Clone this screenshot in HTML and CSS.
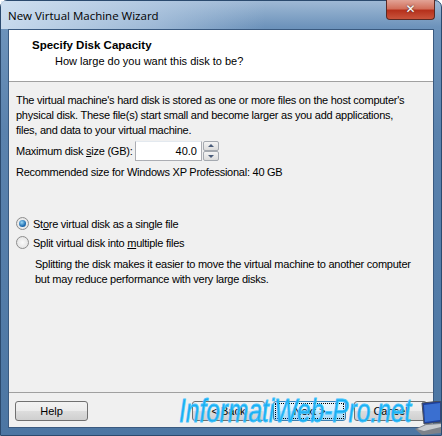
FILE: index.html
```html
<!DOCTYPE html>
<html lang="en">
<head>
    <meta charset="UTF-8">
    <title>New Virtual Machine Wizard</title>
    <link rel="stylesheet" href="styles.css">
</head>
<body>
    <div class="window">
        <div class="titlebar">
            <span class="title">New Virtual Machine Wizard</span>
            <span class="close">&#x2715;</span>
        </div>

        <div class="client">
            <div class="header">
                <div class="header-title">Specify Disk Capacity</div>
                <div class="header-sub">How large do you want this disk to be?</div>
            </div>

            <div class="content">
                <p class="intro">The virtual machine's hard disk is stored as one or more files on the host computer's<br>physical disk. These file(s) start small and become larger as you add applications,<br>files, and data to your virtual machine.</p>

                <div class="size-row">
                    <label for="diskSize">Maximum disk <u>s</u>ize (GB):</label>
                    <div class="spin">
                        <input type="text" id="diskSize" value="40.0">
                        <div class="spin-btns">
                            <span class="spin-up"></span>
                            <span class="spin-down"></span>
                        </div>
                    </div>
                </div>

                <p class="recommended">Recommended size for Windows XP Professional: 40 GB</p>

                <div class="radio-group">
                    <div class="radio-item">
                        <span class="radio checked"></span>
                        <span>St<u>o</u>re virtual disk as a single file</span>
                    </div>
                    <div class="radio-item">
                        <span class="radio"></span>
                        <span>Split virtual disk into <u>m</u>ultiple files</span>
                    </div>
                    <p class="radio-note">Splitting the disk makes it easier to move the virtual machine to another computer<br>but may reduce performance with very large disks.</p>
                </div>
            </div>

            <div class="footer">
                <button class="btn">Help</button>
                <div class="footer-right">
                    <button class="btn">&lt; Back</button>
                    <button class="btn default">Next &gt;</button>
                    <button class="btn">Cancel</button>
                </div>
            </div>
        </div>

        <div class="watermark">InformatiWeb-Pro.net</div>
        <svg class="laptop" width="26" height="34" viewBox="0 0 26 34">
            <polygon points="7,2 26,0 26,21 9,23" fill="#1d3f9a" stroke="#4a4f58" stroke-width="1"/>
            <polygon points="9,4 25,2 25,19 10,21" fill="#3a6fd0"/>
            <polygon points="0,28 11,23 26,22 26,32 7,34" fill="#7d828a"/>
            <polygon points="2,28 11,24 26,23 26,26 9,30" fill="#c9ccd0"/>
        </svg>
    </div>
</body>
</html>
```

FILE: styles.css
```css
html, body {
    margin: 0;
    padding: 0;
}

body {
    width: 442px;
    height: 436px;
    overflow: hidden;
    font-family: 'Liberation Sans', Arial, sans-serif;
    font-size: 11px;
    letter-spacing: -0.25px;
    color: #000;
    background: #fff;
}

.window {
    position: relative;
    box-sizing: border-box;
    width: 442px;
    height: 436px;
    border: 1px solid #2b4a6e;
    border-radius: 7px 7px 0 0;
    background: linear-gradient(180deg, #9fb9d5 0%, #6d93bb 6%, #5a82ad 30%, #4c76a3 100%);
    padding: 0 7px 7px 7px;
    display: flex;
    flex-direction: column;
}

.titlebar {
    height: 28px;
    display: flex;
    align-items: flex-start;
    background: linear-gradient(90deg, rgba(215, 230, 245, 0.85) 0%, rgba(190, 210, 232, 0.6) 35%, rgba(90, 130, 175, 0) 60%);
    margin: 0 -7px;
    padding: 0 7px;
    letter-spacing: 0;
}

.title {
    font-family: 'Open Sans', 'Liberation Sans', sans-serif;
    font-size: 11.5px;
    margin-top: 7px;
    color: #000;
}

.close {
    margin-left: auto;
    margin-right: -1px;
    margin-top: -1px;
    width: 47px;
    height: 19px;
    border: 1px solid #5a2a24;
    border-top: none;
    border-radius: 0 0 4px 4px;
    background: linear-gradient(180deg, #e2a396 0%, #d2705c 45%, #b6311c 55%, #c9543c 100%);
    color: #fff;
    font-family: 'DejaVu Sans', sans-serif;
    font-weight: bold;
    font-size: 12px;
    text-align: center;
    line-height: 19px;
    text-shadow: 0 0 2px #333;
}

.client {
    flex: 1;
    display: flex;
    flex-direction: column;
    background: #f0f0f0;
    border: 1px solid #3a5a80;
}

.header {
    height: 52px;
    background: #fff;
    border-bottom: 1px solid #a0a0a0;
    box-sizing: border-box;
    padding: 6px 0 0 23px;
    letter-spacing: 0;
}

.header-title {
    font-weight: bold;
    font-size: 11.5px;
    height: 18px;
    line-height: 18px;
}

.header-sub {
    padding-left: 23px;
    line-height: 15px;
}

.content {
    flex: 1;
    padding: 11px 8px 0 7px;
}

.intro {
    margin: 0;
    line-height: 15px;
    white-space: nowrap;
}

.size-row {
    display: flex;
    align-items: center;
    margin-top: 3px;
}

.size-row label {
    width: 119px;
    white-space: nowrap;
}

.spin {
    display: flex;
    align-items: center;
}

.spin input {
    box-sizing: border-box;
    width: 67px;
    height: 20px;
    border: 1px solid #abadb3;
    border-top-color: #e3e9ef;
    font: inherit;
    letter-spacing: 0;
    text-align: right;
    padding: 0 4px;
    background: #fff;
}

.spin-btns {
    display: flex;
    flex-direction: column;
    margin-left: 1px;
}

.spin-up, .spin-down {
    position: relative;
    box-sizing: border-box;
    width: 16px;
    height: 10px;
    border: 1px solid #a4a9b0;
    border-radius: 2px;
    background: linear-gradient(180deg, #f4f4f4, #dcdcdc);
}

.spin-up::after, .spin-down::after {
    content: '';
    position: absolute;
    left: 4px;
    border-left: 3px solid transparent;
    border-right: 3px solid transparent;
}

.spin-up::after {
    top: 2px;
    border-bottom: 3px solid #4a5c7a;
}

.spin-down::after {
    top: 3px;
    border-top: 3px solid #4a5c7a;
}

.recommended {
    margin: 5px 0 0 0;
}

.radio-group {
    margin-top: 36px;
}

.radio-item {
    display: flex;
    align-items: center;
    height: 19px;
}

.radio {
    box-sizing: border-box;
    width: 13px;
    height: 13px;
    border: 1px solid #8d8d8d;
    border-radius: 50%;
    background: radial-gradient(circle, #fafafa 0%, #dedede 100%);
    margin-right: 4px;
    position: relative;
}

.radio.checked::after {
    content: '';
    position: absolute;
    left: 2px;
    top: 2px;
    width: 7px;
    height: 7px;
    border-radius: 50%;
    background: radial-gradient(circle at 40% 35%, #9bd8f6 0%, #1f6eb2 60%, #124b86 100%);
}

.radio-note {
    margin: 5px 0 0 19px;
    line-height: 15px;
    white-space: nowrap;
}

.footer {
    height: 35px;
    border-top: 1px solid #a0a0a0;
    box-sizing: border-box;
    display: flex;
    align-items: flex-start;
    justify-content: space-between;
    padding: 8px 6px 0 6px;
}

.footer-right {
    display: flex;
    gap: 8px;
}

.btn {
    box-sizing: border-box;
    width: 73px;
    height: 20px;
    border: 1px solid #707070;
    border-radius: 3px;
    background: linear-gradient(180deg, #f2f2f2 0%, #ebebeb 50%, #dddddd 51%, #cfcfcf 100%);
    font: inherit;
    letter-spacing: 0;
    color: #000;
    padding: 0;
}

.btn.default {
    border-color: #3c7fb1;
    outline: 1px dotted #000;
    outline-offset: -3px;
    background: linear-gradient(180deg, #eaf6fd 0%, #d9f0fc 50%, #bee6fd 51%, #a7d9f5 100%);
}

.watermark {
    position: absolute;
    left: 178px;
    top: 390px;
    font-family: 'Liberation Sans', sans-serif;
    font-style: italic;
    font-size: 34px;
    letter-spacing: 0;
    color: #18aef0;
    -webkit-text-stroke: 0.8px #45c4ff;
    transform: scaleX(0.72);
    transform-origin: left top;
    white-space: nowrap;
}

.laptop {
    position: absolute;
    right: 0;
    bottom: 0;
}
```
